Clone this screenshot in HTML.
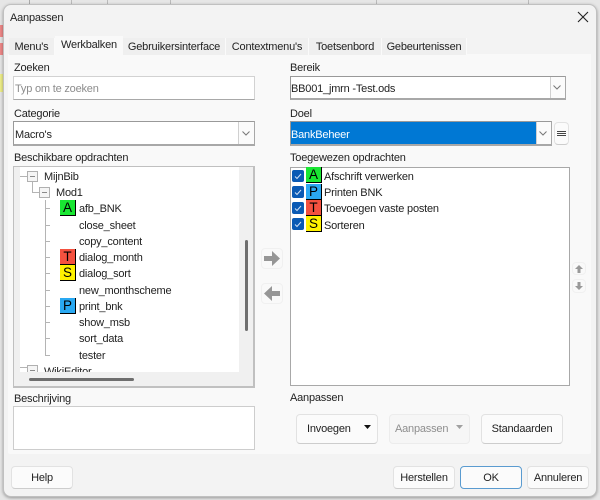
<!DOCTYPE html>
<html><head><meta charset="utf-8">
<style>
html,body{margin:0;padding:0}
body{width:600px;height:500px;overflow:hidden;position:relative;background:#e6e6e6;font-family:"Liberation Sans",sans-serif;font-size:11px;letter-spacing:-.2px;color:#222}
div,span{position:absolute;box-sizing:border-box}
.t{white-space:nowrap;line-height:14px;height:14px;margin-top:1px}
.inp{background:#fff;border:1px solid #d2d2d2;border-bottom:1px solid #a8a8a8}
.sel{background:#fff;border-style:solid;border-width:1px 2px 2px 1px;border-color:#999 #a8a8a8 #a8a8a8 #999}
.dd{background:#fbfbfb;border-left:1px solid #d0d0d0;top:0;bottom:0}
.btn{background:#fbfbfb;border:1px solid #e2e2e2;border-bottom:1px solid #cdcdcd;border-radius:4px;text-align:center}
.tab{background:#efefef;border-right:1px solid #fafafa;top:38px;height:17px;text-align:center;line-height:18px;white-space:nowrap}
.ic{width:16px;height:16px;border:1px solid #000;border-width:0 1px 1px 0;font-size:13.5px;letter-spacing:0;line-height:15px;text-align:center;color:#000}
.g{background:#19e632}.r{background:#f4513f}.y{background:#fff200}.b{background:#2aa9f2}
.cb{left:292px;width:12px;height:12px;background:#0a5ab4;border-radius:2px}
.v{background:#b4b4b4}
.box{width:11px;height:11px;background:#f5f5f5;border:1px solid #b0b0b0}
.box i{position:absolute;left:2px;top:4px;width:5px;height:1px;background:#8a8a8a}
</style></head><body>
<!-- background sheet -->
<div style="left:29px;top:0;width:1px;height:4px;background:#aaa"></div>
<div style="left:71px;top:0;width:1px;height:4px;background:#bbb"></div>
<div style="left:107px;top:0;width:1px;height:4px;background:#bbb"></div>
<div style="left:170px;top:0;width:1px;height:4px;background:#bbb"></div>
<div style="left:376px;top:0;width:1px;height:4px;background:#bbb"></div>
<div style="left:528px;top:0;width:1px;height:4px;background:#bbb"></div>
<div style="left:0;top:25px;width:3px;height:12px;background:#e88"></div>
<div style="left:0;top:43px;width:3px;height:12px;background:#e88"></div>
<div style="left:0;top:74px;width:3px;height:18px;background:#ee8"></div>
<!-- dialog -->
<div style="left:3px;top:4px;width:594px;height:493px;background:#f3f3f3;border:1px solid #c0c0c0;border-radius:8px;box-shadow:0 1px 3px rgba(0,0,0,.35)"></div>
<div class="t" style="left:10px;top:10px;">Aanpassen</div>
<svg style="position:absolute;left:577px;top:11px" width="12" height="12" viewBox="0 0 12 12"><path d="M1 1L11 11M11 1L1 11" stroke="#222" stroke-width="1.1" fill="none"/></svg>

<!-- panel -->
<div style="left:8px;top:54px;width:583px;height:400px;background:#f9f9f9;border-radius:0 0 2px 2px"></div>
<div class="tab" style="left:9px;width:46px">Menu's</div>
<div class="tab" style="left:55px;width:68px;top:36px;height:19px;background:#f9f9f9;line-height:19px;border:0">Werkbalken</div>
<div class="tab" style="left:123px;width:103px">Gebruikersinterface</div>
<div class="tab" style="left:226px;width:83px">Contextmenu's</div>
<div class="tab" style="left:309px;width:73px">Toetsenbord</div>
<div class="tab" style="left:382px;width:85px">Gebeurtenissen</div>

<!-- left column -->
<div class="t" style="left:14px;top:60px">Zoeken</div>
<div class="inp" style="left:13px;top:76px;width:242px;height:24px"></div>
<div class="t" style="left:15px;top:81px;color:#8c8c8c">Typ om te zoeken</div>
<div class="t" style="left:14px;top:106px">Categorie</div>
<div class="sel" style="left:13px;top:121px;width:242px;height:25px"><div class="dd" style="left:224px;width:16px"></div></div>
<svg style="position:absolute;left:241px;top:130px" width="10" height="7" viewBox="0 0 10 7"><path d="M1.5 1.5L5 5L8.5 1.5" stroke="#777" fill="none"/></svg>
<div class="t" style="left:15px;top:127px">Macro's</div>
<div class="t" style="left:14px;top:150px">Beschikbare opdrachten</div>

<!-- tree -->
<div style="left:13px;top:166px;width:242px;height:222px;background:#f0f0f0;border:1px solid #c0c0c0;border-width:1px 2px 2px 1px"></div>
<div style="left:20px;top:167px;width:219px;height:205px;background:#fff;overflow:hidden">
  <div class="v" style="left:0;top:9px;width:7px;height:1px"></div>
  <div class="v" style="left:12px;top:14px;width:1px;height:11px"></div>
  <div class="v" style="left:12px;top:25px;width:7px;height:1px"></div>
  <div class="v" style="left:25px;top:33px;width:1px;height:155px"></div>
  <div class="v" style="left:25px;top:41px;width:5px;height:1px"></div>
  <div class="v" style="left:25px;top:58px;width:5px;height:1px"></div>
  <div class="v" style="left:25px;top:74px;width:5px;height:1px"></div>
  <div class="v" style="left:25px;top:90px;width:5px;height:1px"></div>
  <div class="v" style="left:25px;top:106px;width:5px;height:1px"></div>
  <div class="v" style="left:25px;top:123px;width:5px;height:1px"></div>
  <div class="v" style="left:25px;top:139px;width:5px;height:1px"></div>
  <div class="v" style="left:25px;top:155px;width:5px;height:1px"></div>
  <div class="v" style="left:25px;top:171px;width:5px;height:1px"></div>
  <div class="v" style="left:25px;top:188px;width:5px;height:1px"></div>
  <div class="v" style="left:0;top:200px;width:7px;height:1px"></div>
  <div class="box" style="left:7px;top:4px"><i></i></div>
  <div class="box" style="left:19px;top:20px"><i></i></div>
  <div class="box" style="left:7px;top:198px"><i></i></div>
  <div class="t" style="left:24px;top:2px">MijnBib</div>
  <div class="t" style="left:36px;top:18px">Mod1</div>
  <div class="ic g" style="left:40px;top:33px">A</div><div class="t" style="left:59px;top:34px">afb_BNK</div>
  <div class="t" style="left:59px;top:51px">close_sheet</div>
  <div class="t" style="left:59px;top:67px">copy_content</div>
  <div class="ic r" style="left:40px;top:82px">T</div><div class="t" style="left:59px;top:83px">dialog_month</div>
  <div class="ic y" style="left:40px;top:98px">S</div><div class="t" style="left:59px;top:99px">dialog_sort</div>
  <div class="t" style="left:59px;top:116px">new_monthscheme</div>
  <div class="ic b" style="left:40px;top:131px">P</div><div class="t" style="left:59px;top:132px">print_bnk</div>
  <div class="t" style="left:59px;top:148px">show_msb</div>
  <div class="t" style="left:59px;top:164px">sort_data</div>
  <div class="t" style="left:59px;top:181px">tester</div>
  <div class="t" style="left:24px;top:197px">WikiEditor</div>
</div>
<div style="left:245px;top:240px;width:3px;height:91px;background:#6e6e6e;border-radius:2px"></div>
<div style="left:29px;top:378px;width:105px;height:3px;background:#6e6e6e;border-radius:2px"></div>

<div class="t" style="left:14px;top:391px">Beschrijving</div>
<div style="left:13px;top:406px;width:242px;height:44px;background:#fff;border:1px solid #cdcdcd"></div>

<!-- arrows -->
<div class="btn" style="left:261px;top:248px;width:22px;height:21px;background:#f9f9f9;border-color:#f0f0f0"></div>
<svg style="position:absolute;left:263px;top:250px" width="18" height="17" viewBox="0 0 18 17"><path d="M1 6H9V1L17 8.5L9 16V11H1Z" fill="#969696"/></svg>
<div class="btn" style="left:261px;top:283px;width:22px;height:21px;background:#f9f9f9;border-color:#f0f0f0"></div>
<svg style="position:absolute;left:263px;top:285px" width="18" height="17" viewBox="0 0 18 17"><path d="M17 6H9V1L1 8.5L9 16V11H17Z" fill="#969696"/></svg>

<!-- right column -->
<div class="t" style="left:290px;top:60px">Bereik</div>
<div class="sel" style="left:290px;top:76px;width:276px;height:24px;"><div class="dd" style="left:259px;width:15px"></div></div>
<svg style="position:absolute;left:552px;top:84px" width="10" height="7" viewBox="0 0 10 7"><path d="M1.5 1.5L5 5L8.5 1.5" stroke="#777" fill="none"/></svg>
<div class="t" style="left:291px;top:81px">BB001_jmrn -Test.ods</div>
<div class="t" style="left:290px;top:106px">Doel</div>
<div class="sel" style="left:290px;top:121px;width:262px;height:25px;background:#0078d4"><div class="dd" style="left:245px;width:15px"></div></div>
<svg style="position:absolute;left:538px;top:130px" width="10" height="7" viewBox="0 0 10 7"><path d="M1.5 1.5L5 5L8.5 1.5" stroke="#777" fill="none"/></svg>
<div class="t" style="left:291px;top:127px;color:#fff">BankBeheer</div>
<div class="btn" style="left:554px;top:122px;width:15px;height:23px"></div>
<div style="left:557px;top:131px;width:9px;height:1px;background:#444"></div>
<div style="left:557px;top:133px;width:9px;height:1px;background:#444"></div>
<div style="left:557px;top:135px;width:9px;height:1px;background:#444"></div>
<div class="t" style="left:290px;top:150px">Toegewezen opdrachten</div>
<div style="left:290px;top:167px;width:280px;height:219px;background:#fff;border:1px solid #a8a8a8"></div>

<div class="cb" style="top:170px"></div><div class="ic g" style="left:306px;top:167px">A</div><div class="t" style="left:324px;top:169px">Afschrift verwerken</div>
<div class="cb" style="top:186px"></div><div class="ic b" style="left:306px;top:184px">P</div><div class="t" style="left:324px;top:185px">Printen BNK</div>
<div class="cb" style="top:202px"></div><div class="ic r" style="left:306px;top:200px">T</div><div class="t" style="left:324px;top:201px">Toevoegen vaste posten</div>
<div class="cb" style="top:218px"></div><div class="ic y" style="left:306px;top:216px">S</div><div class="t" style="left:324px;top:218px">Sorteren</div>
<svg style="position:absolute;left:292px;top:170px" width="12" height="61" viewBox="0 0 12 61"><g stroke="#cfe0f5" fill="none"><path d="M3 6.5L5 8.5L9 4"/><path d="M3 22.5L5 24.5L9 20"/><path d="M3 38.5L5 40.5L9 36"/><path d="M3 54.5L5 56.5L9 52"/></g></svg>

<div class="btn" style="left:572px;top:262px;width:14px;height:13px;background:#f9f9f9;border-color:#f0f0f0"></div>
<svg style="position:absolute;left:574px;top:264px" width="10" height="10" viewBox="0 0 10 10"><path d="M5 1L9 5H6.5V9H3.5V5H1Z" fill="#999"/></svg>
<div class="btn" style="left:572px;top:279px;width:14px;height:14px;background:#f9f9f9;border-color:#f0f0f0"></div>
<svg style="position:absolute;left:574px;top:281px" width="10" height="10" viewBox="0 0 10 10"><path d="M5 9L9 5H6.5V1H3.5V5H1Z" fill="#999"/></svg>

<div class="t" style="left:290px;top:390px">Aanpassen</div>
<div class="btn" style="left:296px;top:414px;width:82px;height:30px"></div>
<div class="t" style="left:307px;top:421px">Invoegen</div>
<svg style="position:absolute;left:363px;top:425px" width="9" height="5"><path d="M1 0H8L4.5 4Z" fill="#111"/></svg>
<div class="btn" style="left:389px;top:414px;width:81px;height:30px;background:#f6f6f6;border-color:#ececec"></div>
<div class="t" style="left:395px;top:421px;color:#8e8e8e">Aanpassen</div>
<svg style="position:absolute;left:455px;top:425px" width="9" height="5"><path d="M1 0H8L4.5 4Z" fill="#a0a0a0"/></svg>
<div class="btn" style="left:481px;top:414px;width:82px;height:30px"></div>
<div class="t" style="left:481px;top:421px;width:82px;text-align:center">Standaarden</div>

<!-- bottom -->
<div class="btn" style="left:11px;top:466px;width:62px;height:23px;line-height:22px">Help</div>
<div class="btn" style="left:393px;top:466px;width:62px;height:23px;line-height:22px">Herstellen</div>
<div class="btn" style="left:460px;top:466px;width:62px;height:23px;line-height:22px;border:1px solid #5a9bd0">OK</div>
<div class="btn" style="left:527px;top:466px;width:62px;height:23px;line-height:22px">Annuleren</div>
</body></html>
